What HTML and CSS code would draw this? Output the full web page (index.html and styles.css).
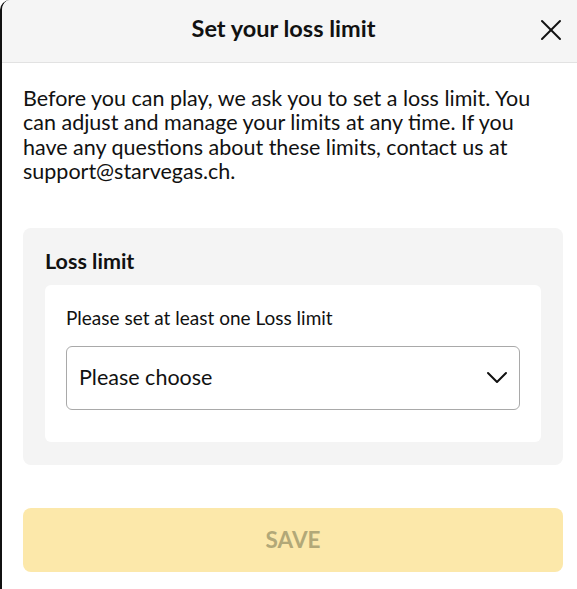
FILE: index.html
```html
<!DOCTYPE html>
<html lang="en">
<head>
    <meta charset="UTF-8">
    <meta name="viewport" content="width=device-width, initial-scale=1.0">
    <title>Set your loss limit</title>
    <link rel="stylesheet" href="styles.css">
</head>
<body>

    <div class="modal">
        <div class="modal-header">
            <h1>Set your loss limit</h1>
            <button class="close-button" aria-label="Close">
                <svg xmlns="http://www.w3.org/2000/svg" width="22" height="22" viewBox="0 0 22 22" fill="none" stroke="currentColor" stroke-width="2" stroke-linecap="round"><line x1="2" y1="2" x2="20" y2="20"></line><line x1="20" y1="2" x2="2" y2="20"></line></svg>
            </button>
        </div>
        <div class="modal-body">
            <p class="intro">Before you can play, we ask you to set a loss limit. You can adjust and manage your limits at any time. If you have any questions about these limits, contact us at support@starvegas.ch.</p>

            <div class="limit-card">
                <h2>Loss limit</h2>
                <div class="limit-inner">
                    <label for="loss-select">Please set at least one Loss limit</label>
                    <div class="select-box" id="loss-select">
                        <span>Please choose</span>
                        <svg class="chevron" xmlns="http://www.w3.org/2000/svg" width="22" height="14" viewBox="0 0 22 14" fill="none" stroke="currentColor" stroke-width="2" stroke-linecap="round" stroke-linejoin="round"><path d="M2 2l9 9 9-9"></path></svg>
                    </div>
                </div>
            </div>

            <button class="save-button" disabled>SAVE</button>
        </div>
    </div>

</body>
</html>
```

FILE: styles.css
```css
:root {
    --font-family: Lato, "Open Sans", Arial, sans-serif;
    --text-color: #111111;
    --header-bg: #f5f5f5;
    --card-bg: #f4f4f4;
    --border-color: #a9a9a9;
    --save-bg: #fce8aa;
    --save-text: #b2a878;
}

body {
    margin: 0;
    background-color: #ffffff;
    font-family: var(--font-family);
    color: var(--text-color);
}

.modal {
    min-height: 589px;
    border-left: 2px solid #111111;
    border-top-left-radius: 10px;
    background-color: #ffffff;
    overflow: hidden;
}

.modal-header {
    height: 62px;
    background-color: var(--header-bg);
    border-bottom: 1px solid #e2e2e2;
    display: flex;
    align-items: center;
    justify-content: center;
    position: relative;
}

.modal-header h1 {
    margin: 0;
    font-size: 23.5px;
    font-weight: 700;
    line-height: 28px;
    padding-right: 12px;
    padding-bottom: 6px;
}

.close-button {
    position: absolute;
    right: 15px;
    top: 19px;
    padding: 0;
    border: none;
    background: none;
    color: #111111;
    cursor: pointer;
    display: flex;
}

.modal-body {
    padding: 23px 14px 0 21px;
}

.intro {
    margin: 0;
    font-size: 21.5px;
    line-height: 24.4px;
}

.limit-card {
    margin-top: 44px;
    padding: 21px 22px 23px 22px;
    background-color: var(--card-bg);
    border-radius: 8px;
}

.limit-card h2 {
    margin: 0 0 12px 0;
    font-size: 21.5px;
    font-weight: 700;
    line-height: 24px;
}

.limit-inner {
    background-color: #ffffff;
    border-radius: 6px;
    padding: 22px 21px 32px 21px;
}

.limit-inner label {
    display: block;
    font-size: 19px;
    line-height: 22px;
    margin-bottom: 17px;
}

.select-box {
    height: 62px;
    border: 1px solid var(--border-color);
    border-radius: 6px;
    display: flex;
    align-items: center;
    justify-content: space-between;
    padding: 0 11px 0 12px;
    font-size: 21.5px;
}

.select-box span {
    padding-bottom: 2px;
}

.chevron { color: #111111; }

.save-button {
    display: block;
    width: 100%;
    height: 64px;
    margin-top: 43px;
    border: none;
    border-radius: 8px;
    background-color: var(--save-bg);
    color: var(--save-text);
    font-family: var(--font-family);
    font-size: 22.5px;
    font-weight: 700;
}
```
